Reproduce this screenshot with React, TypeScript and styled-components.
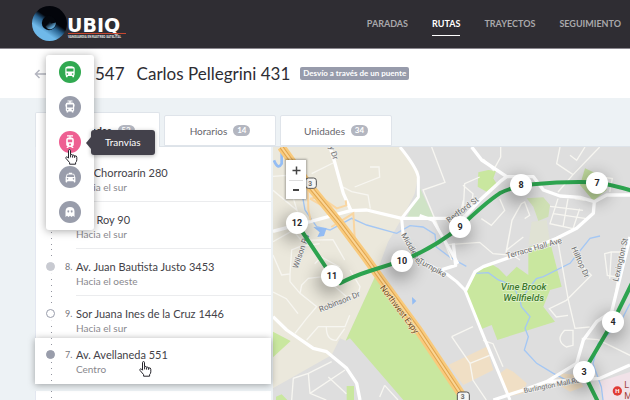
import React from "react";
import styled, { createGlobalStyle, css } from "styled-components";
import { MdDirectionsBus, MdLocalTaxi } from "react-icons/md";

const GlobalStyle = createGlobalStyle`
  *, *::before, *::after { box-sizing: border-box; }
  body { margin: 0; }
  body, button { font-family: Lato, "Open Sans", sans-serif; }
  button { border: 0; padding: 0; margin: 0; background: none; color: inherit; cursor: pointer; }
  ul, ol { list-style: none; margin: 0; padding: 0; }
  a { color: inherit; text-decoration: none; }
`;

const Page = styled.div`
  display: flex;
  flex-direction: column;
  height: 100vh;
  overflow: hidden;
  background: #edf2f5;
  color: #2e2d33;
`;

const Header = styled.header`
  display: flex;
  flex: none;
  align-items: center;
  justify-content: space-between;
  height: 49px;
  padding: 0 9px 0 31px;
  background: #2f2d33;
  border-bottom: 1px solid #8b878f;
`;

const Logo = styled.a`
  display: block;
  height: 38px;
  svg { display: block; }
`;

const Nav = styled.nav`
  display: flex;
  gap: 24px;
`;

const NavLink = styled.a<{ $active?: boolean }>`
  height: 24px;
  line-height: 24px;
  font-size: 9px;
  font-weight: 700;
  color: ${(p) => (p.$active ? "#fff" : "#a9a8ab")};
  border-bottom: 1px solid ${(p) => (p.$active ? "#fff" : "transparent")};
`;

const TitleBar = styled.section`
  position: relative;
  display: flex;
  flex: none;
  align-items: center;
  height: 49px;
  padding-left: 34px;
  background: #fff;
`;

const BackButton = styled.button`
  display: flex;
  width: 61px;
  color: #b4b6c0;
`;

const Title = styled.h1`
  display: flex;
  gap: 12px;
  margin: 0 10px 0 0;
  font-size: 17px;
  line-height: 24px;
  font-weight: 400;
`;

const Tag = styled.span`
  padding: 0 3px;
  border-radius: 2px;
  background: #979bab;
  color: #fff;
  font-size: 8px;
  line-height: 13px;
  font-weight: 700;
`;

const TypeMenu = styled.ul`
  position: absolute;
  z-index: 5;
  top: 6px;
  left: 46px;
  width: 48px;
  border-radius: 3px;
  background: #fff;
  box-shadow: 0 1px 8px rgba(0, 0, 0, 0.35);
`;

const TypeItem = styled.li`
  position: relative;
  display: flex;
  align-items: center;
  justify-content: center;
  height: 35px;
  padding-bottom: 1px;
`;

const TypeButton = styled.button<{ $color: string }>`
  display: flex;
  align-items: center;
  justify-content: center;
  width: 22px;
  height: 22px;
  border-radius: 50%;
  background: ${(p) => p.$color};
  color: #fff;
`;

const Tooltip = styled.span`
  position: absolute;
  left: 45px;
  top: 5px;
  padding: 0 14px;
  border-radius: 3px;
  background: #43414b;
  color: #fff;
  font-size: 10px;
  line-height: 25px;
  box-shadow: 0 1px 4px rgba(0, 0, 0, 0.3);
  &::before {
    content: "";
    position: absolute;
    left: -5px;
    top: 7px;
    border: solid transparent;
    border-width: 6px 5px 6px 0;
    border-right-color: #43414b;
  }
`;

const Pointer = styled.svg<{ $left: number; $top: number }>`
  position: absolute;
  left: ${(p) => p.$left}px;
  top: ${(p) => p.$top}px;
  pointer-events: none;
`;

const Main = styled.main`
  display: flex;
  flex: 1;
  flex-direction: column;
  min-height: 0;
  padding: 14px 0 0 35px;
`;

const Tabs = styled.div`
  display: flex;
  flex: none;
  align-items: flex-start;
  gap: 4px;
  height: 35px;
  border-bottom: 1px solid #dde3e9;
`;

const Tab = styled.button<{ $active?: boolean }>`
  display: flex;
  align-items: center;
  justify-content: center;
  gap: 6px;
  min-width: 112px;
  height: 31px;
  margin-top: 3px;
  border: 1px solid #dfe4ea;
  border-radius: 2px 2px 0 0;
  background: #fff;
  color: #66656b;
  font-size: 10px;
  ${(p) =>
    p.$active &&
    css`
      width: 125px;
      height: 35px;
      margin-top: 0;
      padding-left: 16px;
      border-bottom: 0;
      color: #2e2d33;
      font-weight: 700;
    `}
`;

const Badge = styled.span`
  min-width: 17px;
  border-radius: 6px;
  background: #b3b6c0;
  color: #fff;
  font-size: 8px;
  line-height: 11px;
  font-weight: 700;
  text-align: center;
`;

const Body = styled.div`
  display: grid;
  flex: 1;
  grid-template-columns: 236px minmax(0, 1fr);
  gap: 2px;
  min-height: 0;
`;

const StopList = styled.ol`
  min-height: 0;
`;

const Stop = styled.li<{ $kind?: "first" | "last" | "active" | "next" }>`
  position: relative;
  display: grid;
  grid-template-columns: 29px 11px 1fr;
  align-content: start;
  height: 47px;
  padding-top: 9px;
  background: #fff;
  border-left: 1px solid #e3e7f0;
  ${(p) => p.$kind === "first" && css`height: 55px; padding-top: 17px;`}
  ${(p) => p.$kind === "last" && css`height: 42px;`}
  ${(p) =>
    p.$kind === "active" &&
    css`
      z-index: 2;
      height: 46px;
      padding-top: 8px;
      border-left-color: #fff;
      box-shadow: 0 1px 7px rgba(0, 0, 0, 0.35);
    `}
  ${(p) => p.$kind === "next" && css`height: 62px; margin-top: 7px; padding-top: 24px;`}
  &::before {
    content: "";
    position: absolute;
    left: 15px;
    top: 0;
    bottom: 0;
    width: 1px;
    background: repeating-linear-gradient(#92949f 0 1px, #fff 1px 6px);
  }
`;

const Mark = styled.span<{ $look: "soft" | "ring" | "solid" }>`
  position: relative;
  width: 9px;
  height: 9px;
  margin: 4px 0 0 10px;
  border: 1px solid ${(p) => (p.$look === "soft" ? "#c8cad1" : "#999dab")};
  border-radius: 50%;
  background: ${(p) => ({ soft: "#c8cad1", ring: "#fff", solid: "#999dab" })[p.$look]};
  box-shadow: 0 0 0 3px #fff;
`;

const Order = styled.span`
  color: #77767b;
  font-size: 9px;
  line-height: 18px;
`;

const Place = styled.a<{ $ruled?: boolean }>`
  display: block;
  height: 38px;
  border-bottom: 1px solid ${(p) => (p.$ruled ? "#ebecee" : "transparent")};
`;

const PlaceName = styled.span`
  display: block;
  font-size: 11px;
  line-height: 18px;
  color: #434248;
  white-space: nowrap;
`;

const Direction = styled.span`
  display: block;
  font-size: 10px;
  line-height: 10px;
  color: #89888d;
`;

const MapPanel = styled.section`
  position: relative;
  overflow: hidden;
  min-height: 0;
  background: #dedede;
`;

const MapDrawing = styled.svg`
  display: block;
  width: 100%;
  height: 100%;
`;

const ZoomControl = styled.div`
  position: absolute;
  left: 13px;
  top: 13px;
  width: 20px;
  padding: 0 3px;
  background: #fff;
  box-shadow: 0 0 2px 1px rgba(0, 0, 0, 0.3);
`;

const ZoomButton = styled.button`
  display: flex;
  align-items: center;
  justify-content: center;
  width: 100%;
  height: 20px;
  color: #444;
  & + & { height: 19px; border-top: 1px solid #ddd; }
`;

const Pin = styled.button<{ $x: number; $y: number }>`
  position: absolute;
  left: ${(p) => p.$x - 11}px;
  top: ${(p) => p.$y - 11}px;
  width: 22px;
  height: 22px;
  border-radius: 50%;
  background: #fff;
  color: #26252a;
  font-family: Roboto, sans-serif;
  font-size: 9px;
  line-height: 22px;
  font-weight: 700;
  text-align: center;
  box-shadow: -2px 5px 16px 3px rgba(0, 0, 0, 0.3);
`;

const Hand = ({ left, top }: { left: number; top: number }) => (
  <Pointer $left={left} $top={top} width="13" height="16" viewBox="0 0 13 16" aria-hidden="true">
    <path
      d="M3.5 1.6Q3.5.6 4.5.6T5.5 1.6V5.6Q7.2 4.8 7.6 6.2 9.2 5.6 9.6 6.9 11.8 6.4 11.8 8.4V10.8Q11.8 12.5 10.6 13.6V15.2H4.6V13.6L1 9.4Q.4 8.2 1.5 7.9 2.5 7.8 3.5 9.2Z"
      fill="#fff"
      stroke="#25242b"
      strokeLinejoin="round"
    />
    <path d="M5.6 5.8V8.4M7.6 6.4V8.6M9.6 7V8.8" stroke="#25242b" fill="none" />
  </Pointer>
);

const BackIcon = () => (
  <svg width="12" height="10" viewBox="0 0 12 10" fill="none" stroke="currentColor" strokeWidth="1.5" aria-hidden="true">
    <path d="M12 5H1.5M5.5 1 1.5 5l4 4" />
  </svg>
);

const TrolleyIcon = () => (
  <svg width="14" height="14" viewBox="0 0 14 14" fill="currentColor" aria-hidden="true">
    <path
      fillRule="evenodd"
      d="M4.5.4h5v1H7.7v1h1.6q1.9 0 2 1.900l.3.2v2h-.4v3.800q0 .7-.8.9v1.400H8.800v-1.200H5.200v1.200H3.600v-1.400q-.8-.2-.8-.9V6.500h-.4v-2l.3-.2q.1-1.900 2-1.900h1.600v-1H4.500zM4.100 4.600v3h5.800v-3zM4.700 8.700a.7.7 0 1 0 .01 0zM9.300 8.700a.7.7 0 1 0 .01 0z"
    />
  </svg>
);

const TramIcon = () => (
  <svg width="14" height="14" viewBox="0 0 14 14" fill="currentColor" aria-hidden="true">
    <path
      fillRule="evenodd"
      d="M4 .3h6v1.100H7.600v1.200h1.200q2 .2 2 2.200v5q0 1.200-1.400 1.500l1.300 1.800H9L8.100 12H5.900L5 13.100H3.300l1.300-1.800Q3.200 11 3.200 9.800v-5q0-2 2-2.200h1.200V1.400H4zM4.800 4.500v2.700h4.400V4.500zM7 8.500a1 1 0 1 0 .01 0z"
    />
  </svg>
);

const GhostIcon = () => (
  <svg width="12" height="12" viewBox="0 0 12 12" fill="currentColor" aria-hidden="true">
    <path
      fillRule="evenodd"
      d="M1.500 11V5.200Q1.700 1.200 6 1.100q4.300.1 4.500 4.100V11L9 9.800 7.500 11 6 9.800 4.500 11 3 9.800zM4.300 4.300a.9 1.100 0 1 0 .01 0zM7.700 4.300a.9 1.100 0 1 0 .01 0z"
    />
  </svg>
);

const UbiqLogo = () => (
  <svg width="110" height="38" viewBox="0 0 110 38" role="img" aria-label="UBIQ">
    <defs>
      <linearGradient id="disc" x1="0.8" y1="0.1" x2="0.25" y2="0.9">
        <stop offset="0.4" stopColor="#03050b" />
        <stop offset="0.55" stopColor="#27618f" />
        <stop offset="0.8" stopColor="#6fb9ea" />
      </linearGradient>
      <linearGradient id="eye" x1="0" y1="0.1" x2="0.7" y2="0.9">
        <stop offset="0.3" stopColor="#0a1420" />
        <stop offset="0.9" stopColor="#67b0e0" />
      </linearGradient>
    </defs>
    <circle cx="18.500" cy="18.500" r="17.500" fill="url(#disc)" />
    <circle cx="18" cy="18" r="7.200" fill="#04070d" />
    <path d="M14.500 21.500 19 16.500l1 2 5-1q-.5 6-5.500 6.800-3 .2-5-2.800z" fill="url(#eye)" />
    <text x="36" y="27" fill="#fff" fontFamily="DejaVu Sans, sans-serif" fontWeight="700" fontSize="19">UBIQ</text>
    <rect x="37" y="28" width="58" height="1" fill="#c9472f" />
    <text x="37" y="33" fill="#e6e6e8" fontFamily="Roboto, sans-serif" fontWeight="700" fontSize="3">VANGUARDIA EN RASTREO SATELITAL</text>
  </svg>
);

/* Drawn at three units per pixel, origin in the top left corner of the panel. */
const CityMap = () => (
  <MapDrawing viewBox="0 0 1071 759" preserveAspectRatio="xMinYMin slice" role="img" aria-label="Mapa de la ruta">
    <path d="M0 0H381L438 74 425 140 395 200 345 285 306 389 218 581 201 574 176 624 0 724Z" fill="#ebe8dc" />
    <path d="M306 389 218 581 231 574 391 759H576L441 549Z" fill="#c9e79f" />
    <g fill="#c9e79f">
      <path d="M0 554 53 582 0 631ZM221 717H243V759H221ZM9 749 26 742 43 759H9Z" />
      <path d="M616 76 646 69 669 72 661 94 673 114 646 137 614 119Z" />
      <path d="M936 64 991 89 1001 129 961 161 921 114Z" fill="#bfd99c" />
      <path d="M761 154 811 151 831 174 826 209 796 222 781 179Z" fill="#cfe0b4" />
      <path d="M776 224 821 219 831 284 766 294Z" fill="#e0e2d4" />
      <path d="M576 434 601 384 651 349 676 364 701 389 731 359 766 384 766 300 831 284 866 419 831 429 811 479 846 524 673 579 656 534 626 546Z" />
      <path d="M441 124 481 209 401 212Z" fill="#cfe3c6" />
    </g>
    <g fill="#f0dfc5">
      <path d="M526 654 641 599 661 669 571 714ZM681 679 701 664 721 674 761 709 751 739 701 749ZM866 679 911 684 931 719 891 734 851 709Z" />
      <path d="M976 704 1071 675V759H990Z" fill="#f1e2e8" />
    </g>
    <g fill="none" stroke="#a4c7f4" strokeWidth="4">
      <path d="M80 100 96 189 131 239 171 249 236 214 281 234 371 259 411 236 450 240 486 262 490 300 530 330 580 358M611 379 646 377 676 399 720 415 741 459 745 479 771 509 756 544 766 569 754 609 791 649 841 679 900 710M741 459 790 395 811 389 891 349 951 274 981 267M1071 470 1040 530 975 590 960 650 985 720 990 759" />
      <path d="M26 9V50Q15 70 3 40" strokeWidth="8" stroke="#94bdf4" />
    </g>
    <path d="M121 240 161 243 153 267 133 270 140 256ZM417 450 430 462 418 473Z" fill="#94bdf4" />
    <g fill="none" stroke="#f7f6f1" strokeWidth="4">
      <path d="M0 88 40 85 72 190 0 130M116 80 180 48M200 115 236 134 285 144 292 185M245 120 320 90 318 60 291 60M0 284 60 250 85 280 180 278 215 339M0 324 26 384 51 381 56 309 80 299 140 290M51 404 81 439 131 479 101 514 66 559M51 381V404M81 439 86 414 106 394 151 389 221 449 256 439 261 419 231 369M101 579 136 539H216L230 505M160 540Q160 580 190 580L215 545M0 435 40 455 75 500M125 350 145 330 200 360" />
      <path d="M176 644 106 679 61 694 56 759M106 679 111 739 160 759M111 739 216 669M166 690 220 740M335 715 320 750M335 715 375 759" />
      <path d="M476 0 516 106 450 129 475 190 536 339M683 0V30L661 70 631 36M620 90 575 110 570 205M570 115 600 140 595 180M571 160 555 230M525 293 620 286 660 320 720 325 741 339M700 315 717 220 745 170 755 165 770 205 755 215M717 220 700 310 751 270M625 215 655 235 695 190 680 155" />
      <path d="M861 0 851 50 900 83 980 0M891 25 911 40 936 0M900 83 855 135M855 155 831 230 900 245 920 185M841 200 940 215M831 178 930 190M885 155 870 240M905 155 935 160M985 90 1018 95 1010 135M1015 315 995 320 1003 385 1030 390M855 285 886 459 906 544 950 540M900 320 930 360 955 385 880 460 829 485 850 510 885 505M875 550Q845 580 880 600L900 595V550Z" />
      <path d="M536 569 600 539M536 569 591 649 600 700 640 759M591 649 650 625M630 580 660 590 690 659M926 574 975 578 1071 625M1010 395 1015 315H1060M1071 270 1045 315 1020 490" />
    </g>
    <g fill="none" stroke="#fff" strokeWidth="10" strokeLinejoin="round">
      <path d="M171 0 186 49 211 139 233 189M0 253 111 224 233 191 281 189 386 214H531" />
      <path d="M381 0Q430 60 436 90V150L386 214 391 270 430 335 521 381 551 404 576 429 626 554 711 759M440 205 480 220 555 350" strokeWidth="9" />
      <path d="M0 509 41 549 121 604 161 614 221 664 251 709 261 759" />
      <path d="M596 0 626 39 701 89H781L811 129 861 147 921 151 964 164 1001 144H1071M701 89 681 104 621 159 560 225M964 164 961 199 911 244 851 274 731 324 631 359 606 374 576 434M541 289 548 355 500 370" />
      <path d="M661 759 751 729 821 704 911 699 981 694 1071 654M821 704 911 649 931 579 971 524 1016 494 1071 270" />
    </g>
    <g fill="none" stroke="#f9d6a2" strokeWidth="6">
      <path d="M104 105 106 189 113 220M111 155 141 149 191 184 220 175 218 160M111 155 180 195M175 240 241 199 246 289 225 245" />
    </g>
    <g fill="none">
      <path d="M25 0 111 119 201 229 276 329 326 399 436 549 576 759" stroke="#f9ca7c" strokeWidth="26" />
      <path d="M25 0 111 119 201 229 276 329 326 399 436 549 576 759" stroke="#e0a650" strokeWidth="12" />
      <path d="M25 0 111 119 201 229 276 329 326 399 436 549 576 759" stroke="#fbd595" strokeWidth="6" />
    </g>
    <g fill="#f6f6f4" stroke="#555" strokeWidth="3">
      <rect x="98" y="93" width="32" height="31" rx="8" />
      <rect x="553" y="735" width="36" height="34" rx="8" />
    </g>
    <g fontFamily="Roboto, sans-serif" fill="#6c6c6c" fontSize="24" stroke="#f1f1ef" strokeWidth="4" paintOrder="stroke">
      <text x="106" y="117" fontWeight="700" fontSize="20">3</text>
      <text x="563" y="757" fontWeight="700" fontSize="20">3</text>
      <text transform="translate(168 0) rotate(72)">y Dr</text>
      <text transform="translate(74 366) rotate(-71)">Wilson Rd</text>
      <text transform="translate(142 496) rotate(-22)">Robinson Dr</text>
      <text transform="translate(384 263) rotate(61)">Middlesex</text>
      <text transform="translate(434 347) rotate(29)">Turnpike</text>
      <text transform="translate(528 229) rotate(-37)">Bedford St</text>
      <text transform="translate(702 335) rotate(-16)">Terrace Hall Ave</text>
      <text transform="translate(894 304) rotate(65)">Hilltop Dr</text>
      <text transform="translate(1035 405) rotate(-77)">Lexington St</text>
      <text transform="translate(754 738) rotate(-11)" fontSize="21">Burlington Mall Rd</text>
      <text transform="translate(320 422) rotate(53)" fontSize="25" fill="#6d4b1e" stroke="#fce3b8">Northwest Expy</text>
    </g>
    <g fontFamily="Roboto, sans-serif" fontStyle="italic" fontWeight="500" fontSize="29" fill="#3c7a2c" textAnchor="middle" stroke="#e4f3d0" strokeWidth="4" paintOrder="stroke">
      <text x="752" y="430">Vine Brook</text>
      <text x="752" y="463">Wellfields</text>
    </g>
    <g fill="none" stroke="#2da44f" strokeWidth="12" strokeLinejoin="round">
      <path d="M71 229 176 387 201 409Q240 388 290 372L388 341Q480 305 562 239 640 165 680 139 720 118 780 112 880 102 971 106 1020 115 1085 133" />
      <path d="M1085 392 1019 526 931 676 980 775" />
    </g>
    <circle cx="1033" cy="732" r="14" fill="#e03b35" />
    <g fontFamily="Roboto, sans-serif" fontWeight="700">
      <text x="1027" y="739" fontSize="18" fill="#fff">H</text>
      <g fontSize="27" fontWeight="400" fill="#a2443f">
        <text x="1054" y="724">L</text>
        <text x="1054" y="755">M</text>
      </g>
    </g>
  </MapDrawing>
);

const vehicleTypes = [
  { label: "Colectivos", color: "#31a951", icon: <MdDirectionsBus size={14} /> },
  { label: "Trolebuses", color: "#999dab", icon: <TrolleyIcon /> },
  { label: "Tranvías", color: "#ee5f92", icon: <TramIcon />, hovered: true },
  { label: "Taxis", color: "#999dab", icon: <MdLocalTaxi size={13} /> },
  { label: "Fantasmas", color: "#999dab", icon: <GhostIcon /> },
];

const tabs = [
  { label: "Paradas", count: 53, active: true },
  { label: "Horarios", count: 14 },
  { label: "Unidades", count: 34 },
];

type StopData = {
  order: string;
  name: string;
  to: string;
  look: "soft" | "ring" | "solid";
  kind?: "first" | "last" | "active" | "next";
};

const stops: StopData[] = [
  { order: "6.", name: "Av. Chorroarín 280", to: "Hacia el sur", look: "soft", kind: "first" },
  { order: "7.", name: "Pje. Roy 90", to: "Hacia el sur", look: "soft" },
  { order: "8.", name: "Av. Juan Bautista Justo 3453", to: "Hacia el oeste", look: "soft" },
  { order: "9.", name: "Sor Juana Ines de la Cruz 1446", to: "Hacia el sur", look: "ring", kind: "last" },
  { order: "7.", name: "Av. Avellaneda 551", to: "Centro", look: "solid", kind: "active" },
];

const pins = [
  { n: 12, x: 24, y: 76 },
  { n: 11, x: 59, y: 129 },
  { n: 10, x: 129, y: 114 },
  { n: 9, x: 187, y: 80 },
  { n: 8, x: 248, y: 38 },
  { n: 7, x: 324, y: 36 },
  { n: 4, x: 340, y: 175 },
  { n: 3, x: 311, y: 225 },
];

export default function App() {
  return (
    <Page>
      <GlobalStyle />
      <Header>
        <Logo href="#inicio">
          <UbiqLogo />
        </Logo>
        <Nav>
          <NavLink href="#paradas">PARADAS</NavLink>
          <NavLink href="#rutas" $active aria-current="page">RUTAS</NavLink>
          <NavLink href="#trayectos">TRAYECTOS</NavLink>
          <NavLink href="#seguimiento">SEGUIMIENTO</NavLink>
        </Nav>
      </Header>
      <TitleBar>
        <BackButton aria-label="Volver">
          <BackIcon />
        </BackButton>
        <Title>
          <span>547</span>
          <span>Carlos Pellegrini 431</span>
        </Title>
        <Tag>Desvío a través de un puente</Tag>
        <TypeMenu>
          {vehicleTypes.map((t) => (
            <TypeItem key={t.label}>
              <TypeButton $color={t.color} aria-label={t.label}>
                {t.icon}
              </TypeButton>
              {t.hovered && <Tooltip role="tooltip">{t.label}</Tooltip>}
              {t.hovered && <Hand left={19} top={24} />}
            </TypeItem>
          ))}
        </TypeMenu>
      </TitleBar>
      <Main>
        <Tabs role="tablist">
          {tabs.map((t) => (
            <Tab key={t.label} role="tab" aria-selected={!!t.active} $active={t.active}>
              {t.label}
              <Badge>{t.count}</Badge>
            </Tab>
          ))}
        </Tabs>
        <Body>
          <StopList>
            {stops.map((s, i) => (
              <Stop key={s.name} $kind={s.kind}>
                <Mark $look={s.look} />
                <Order>{s.order}</Order>
                <Place href={`#parada-${i}`} $ruled={i < 3}>
                  <PlaceName>{s.name}</PlaceName>
                  <Direction>{s.to}</Direction>
                </Place>
                {s.kind === "active" && <Hand left={103} top={23} />}
              </Stop>
            ))}
            <Stop $kind="next" aria-hidden="true" />
          </StopList>
          <MapPanel>
            <CityMap />
            {pins.map((p) => (
              <Pin key={p.n} $x={p.x} $y={p.y}>
                {p.n}
              </Pin>
            ))}
            <ZoomControl>
              <ZoomButton aria-label="Acercar">
                <svg width="9" height="9" viewBox="0 0 9 9" stroke="currentColor" strokeWidth="1.5">
                  <path d="M4.500 .5v8M.5 4.500h8" />
                </svg>
              </ZoomButton>
              <ZoomButton aria-label="Alejar">
                <svg width="6" height="4" viewBox="0 0 6 4" stroke="currentColor" strokeWidth="2">
                  <path d="M0 2h6" />
                </svg>
              </ZoomButton>
            </ZoomControl>
          </MapPanel>
        </Body>
      </Main>
    </Page>
  );
}
